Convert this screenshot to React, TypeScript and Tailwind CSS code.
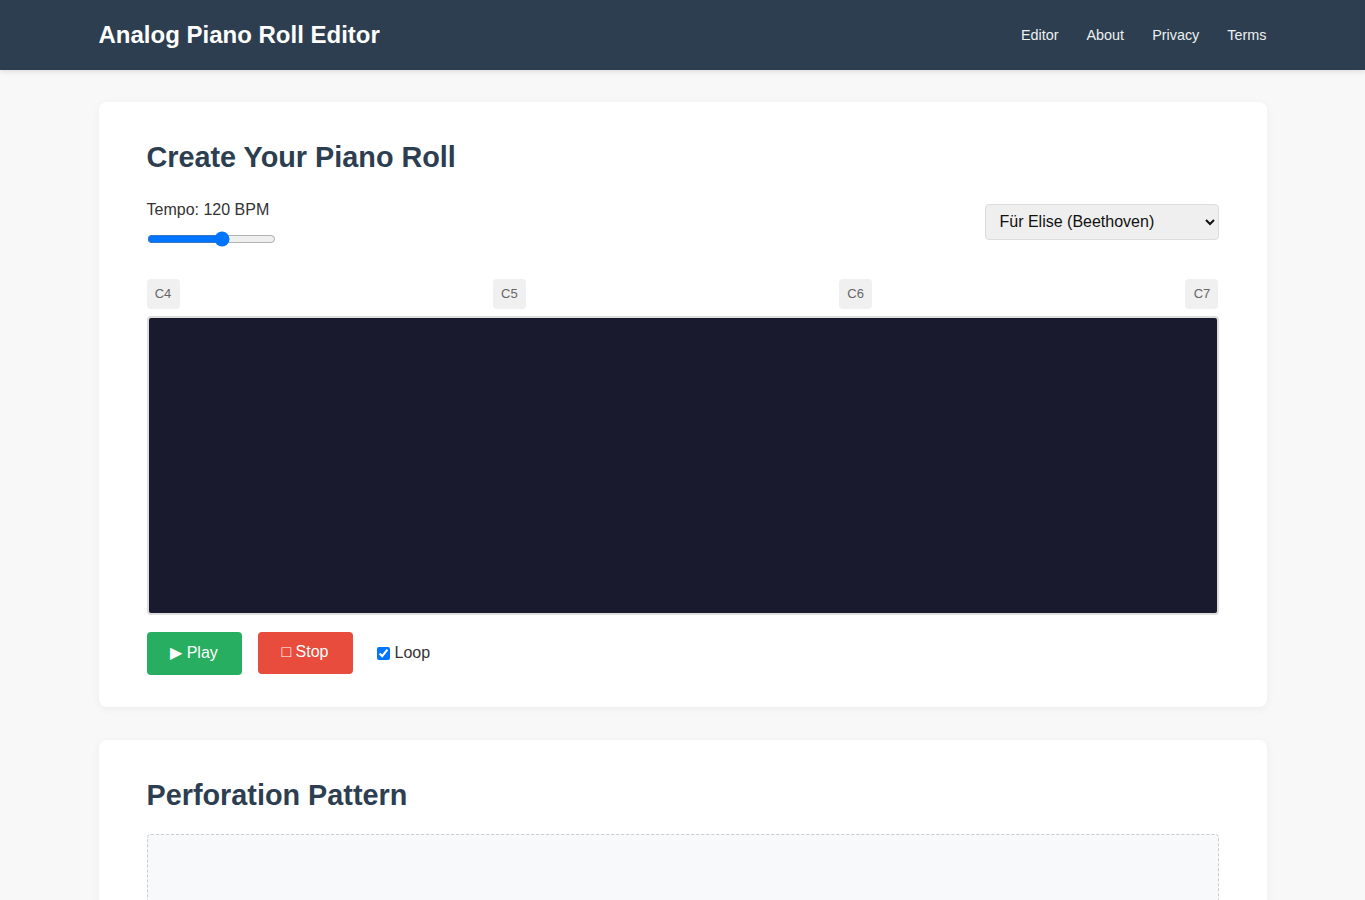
import React, { useState } from "react";

const navLinks = ["Editor", "About", "Privacy", "Terms"];
const octaves = ["C4", "C5", "C6", "C7"];

const Header = () => (
  <header className="bg-[#2c3e50] shadow-[0_2px_5px_rgba(0,0,0,0.1)]">
    <div className="mx-auto flex h-[70px] max-w-[1200px] items-center justify-between px-4">
      <h1 className="text-[24px] font-bold text-white">Analog Piano Roll Editor</h1>
      <nav className="mt-[2px] flex gap-[28px] text-[14.4px] text-[#ecf0f1]">
        {navLinks.map((link) => (
          <a key={link} href="#" className="hover:text-white">
            {link}
          </a>
        ))}
      </nav>
    </div>
  </header>
);

const Card = ({ children }: { children: React.ReactNode }) => (
  <section className="rounded-lg bg-white px-12 pt-12 pb-8 shadow-[0_2px_10px_rgba(0,0,0,0.05)]">
    {children}
  </section>
);

export default function App() {
  const [tempo, setTempo] = useState(120);
  const [loop, setLoop] = useState(true);

  return (
    <div className="min-h-screen bg-[#f8f8f8] font-['Liberation_Sans',Arial,sans-serif] text-[#333]">
      <Header />
      <main className="mx-auto flex max-w-[1200px] flex-col gap-[33px] px-4 py-8">
        <Card>
          <h2 className="mt-[-10px] text-[28.8px] font-bold leading-tight text-[#2c3e50]">
            Create Your Piano Roll
          </h2>

          {/* tempo + song picker */}
          <div className="mt-[24px] flex items-start justify-between">
            <div>
              <label className="block text-[16px] leading-[20px]">Tempo: {tempo} BPM</label>
              <input
                type="range"
                min={60}
                max={160}
                value={tempo}
                onChange={(e) => setTempo(Number(e.target.value))}
                className="mt-[11px] w-[129px] accent-[#0075ff]"
              />
            </div>
            <select className="mt-[4px] h-[36px] w-[234px] rounded border border-[#ddd] bg-[#efefef] px-[10px] text-[16px] text-[#111]">
              <option>Für Elise (Beethoven)</option>
              <option>Moonlight Sonata</option>
              <option>Canon in D</option>
            </select>
          </div>

          {/* octave markers */}
          <div className="mt-[25px] flex justify-between">
            {octaves.map((o) => (
              <span
                key={o}
                className="flex h-[30px] w-[33px] items-center justify-center rounded bg-[#f0f0f0] text-[13px] text-[#666]"
              >
                {o}
              </span>
            ))}
          </div>

          {/* roll canvas */}
          <div className="mt-[7px] h-[299px] rounded border-2 border-[#ddd] bg-[#1a1a2e]" />

          <div className="mt-[17px] flex items-center gap-4">
            <button className="h-[43px] w-[95px] rounded bg-[#27ae60] text-[16px] text-white">
              ▶ Play
            </button>
            <button className="h-[42px] w-[95px] rounded bg-[#e74c3c] pb-[2px] text-[16px] text-white">
              □ Stop
            </button>
            <label className="ml-2 flex items-center gap-[5px] text-[16px]">
              <input
                type="checkbox"
                checked={loop}
                onChange={(e) => setLoop(e.target.checked)}
                className="h-[13px] w-[13px] accent-[#0075ff]"
              />
              Loop
            </label>
          </div>
        </Card>

        <Card>
          <h2 className="mt-[-10px] text-[28.8px] font-bold leading-tight text-[#2c3e50]">
            Perforation Pattern
          </h2>
          <div className="mt-[20px] h-[200px] rounded border border-dashed border-[#ccc] bg-[#f8f9fa]" />
        </Card>
      </main>
    </div>
  );
}
